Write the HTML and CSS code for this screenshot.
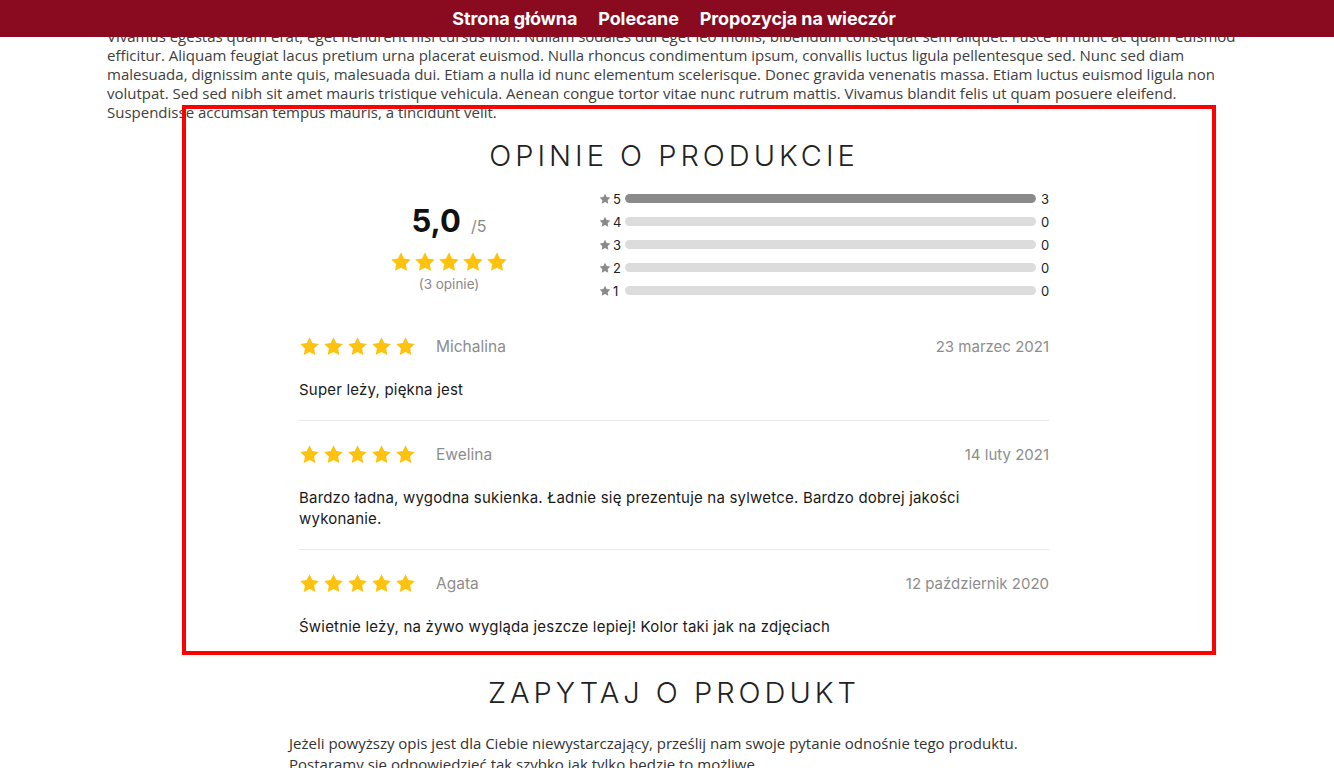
FILE: index.html
```html
<!DOCTYPE html>
<html lang="pl">
<head>
<meta charset="utf-8">
<title>Opinie o produkcie</title>
<link rel="stylesheet" href="styles.css">
</head>
<body>
<svg class="defs" width="0" height="0" aria-hidden="true">
  <symbol id="star" viewBox="0 0 24 24">
    <path d="M12 1.4l3.25 6.7 7.35 1.05-5.3 5.2 1.3 7.3L12 18.2l-6.6 3.45 1.3-7.3-5.3-5.2 7.35-1.05z"/>
  </symbol>
</svg>

<header class="topnav">
  <a href="#">Strona główna</a>
  <a href="#">Polecane</a>
  <a href="#">Propozycja na wieczór</a>
</header>

<main class="page">
  <p class="lorem">Vivamus egestas quam erat, eget hendrerit nisi cursus non. Nullam sodales dui eget leo mollis, bibendum consequat sem aliquet. Fusce in nunc ac quam euismod efficitur. Aliquam feugiat lacus pretium urna placerat euismod. Nulla rhoncus condimentum ipsum, convallis luctus ligula pellentesque sed. Nunc sed diam malesuada, dignissim ante quis, malesuada dui. Etiam a nulla id nunc elementum scelerisque. Donec gravida venenatis massa. Etiam luctus euismod ligula non volutpat. Sed sed nibh sit amet mauris tristique vehicula. Aenean congue tortor vitae nunc rutrum mattis. Vivamus blandit felis ut quam posuere eleifend. Suspendisse accumsan tempus mauris, a tincidunt velit.</p>

  <section class="reviews">
    <h2 class="section-title">Opinie o produkcie</h2>

    <div class="summary">
      <div class="score">
        <div class="score-value"><strong>5,0</strong><span>/5</span></div>
        <div class="stars stars-big">
          <svg><use href="#star"/></svg><svg><use href="#star"/></svg><svg><use href="#star"/></svg><svg><use href="#star"/></svg><svg><use href="#star"/></svg>
        </div>
        <div class="score-count">(3 opinie)</div>
      </div>

      <ul class="bars">
        <li><svg class="bar-star"><use href="#star"/></svg><span class="bar-label">5</span><span class="bar"><span class="bar-fill" style="width:100%"></span></span><span class="bar-count">3</span></li>
        <li><svg class="bar-star"><use href="#star"/></svg><span class="bar-label">4</span><span class="bar"><span class="bar-fill" style="width:0%"></span></span><span class="bar-count">0</span></li>
        <li><svg class="bar-star"><use href="#star"/></svg><span class="bar-label">3</span><span class="bar"><span class="bar-fill" style="width:0%"></span></span><span class="bar-count">0</span></li>
        <li><svg class="bar-star"><use href="#star"/></svg><span class="bar-label">2</span><span class="bar"><span class="bar-fill" style="width:0%"></span></span><span class="bar-count">0</span></li>
        <li><svg class="bar-star"><use href="#star"/></svg><span class="bar-label">1</span><span class="bar"><span class="bar-fill" style="width:0%"></span></span><span class="bar-count">0</span></li>
      </ul>
    </div>

    <div class="review-list">
      <article class="review">
        <div class="review-head">
          <div class="stars"><svg><use href="#star"/></svg><svg><use href="#star"/></svg><svg><use href="#star"/></svg><svg><use href="#star"/></svg><svg><use href="#star"/></svg></div>
          <span class="review-author">Michalina</span>
          <span class="review-date">23 marzec 2021</span>
        </div>
        <p class="review-text">Super leży, piękna jest</p>
      </article>

      <article class="review">
        <div class="review-head">
          <div class="stars"><svg><use href="#star"/></svg><svg><use href="#star"/></svg><svg><use href="#star"/></svg><svg><use href="#star"/></svg><svg><use href="#star"/></svg></div>
          <span class="review-author">Ewelina</span>
          <span class="review-date">14 luty 2021</span>
        </div>
        <p class="review-text">Bardzo ładna, wygodna sukienka. Ładnie się prezentuje na sylwetce. Bardzo dobrej jakości wykonanie.</p>
      </article>

      <article class="review">
        <div class="review-head">
          <div class="stars"><svg><use href="#star"/></svg><svg><use href="#star"/></svg><svg><use href="#star"/></svg><svg><use href="#star"/></svg><svg><use href="#star"/></svg></div>
          <span class="review-author">Agata</span>
          <span class="review-date">12 październik 2020</span>
        </div>
        <p class="review-text">Świetnie leży, na żywo wygląda jeszcze lepiej! Kolor taki jak na zdjęciach</p>
      </article>
    </div>
  </section>

  <section class="ask">
    <h2 class="section-title">Zapytaj o produkt</h2>
    <p class="ask-text">Jeżeli powyższy opis jest dla Ciebie niewystarczający, prześlij nam swoje pytanie odnośnie tego produktu. Postaramy się odpowiedzieć tak szybko jak tylko będzie to możliwe.</p>
  </section>
</main>

<div class="highlight" aria-hidden="true"></div>
</body>
</html>
```

FILE: styles.css
```css
* {
  box-sizing: border-box;
}

html, body {
  margin: 0;
  padding: 0;
}

body {
  position: relative;
  background: #fff;
  color: #3d3d3d;
  font-family: "Open Sans", "Liberation Sans", sans-serif;
  overflow: hidden;
  height: 768px;
}

.defs {
  position: absolute;
  width: 0;
  height: 0;
}

/* fixed top navigation bar */
.topnav {
  position: fixed;
  top: 0;
  left: 0;
  right: 0;
  z-index: 10;
  height: 37px;
  background: #8a0b1f;
  display: flex;
  justify-content: center;
  align-items: center;
  gap: 21px;
  padding-left: 14px;
}

.topnav a {
  color: #fff;
  text-decoration: none;
  font-family: Inter, "DejaVu Sans", sans-serif;
  font-weight: 700;
  font-size: 18px;
  letter-spacing: -0.1px;
}

.page {
  width: 1148px;
  margin: 0 auto;
  padding-left: 14px;
}

.lorem {
  margin: 0;
  padding-top: 27px;
  font-size: 15px;
  line-height: 19px;
  color: #404040;
}

/* reviews block */
.reviews {
  width: 750px;
  margin: 0 auto;
  font-family: Inter, "DejaVu Sans", sans-serif;
}

.section-title {
  margin: 0;
  text-align: center;
  font-family: Inter, "DejaVu Sans", sans-serif;
  font-weight: 300;
  font-size: 29px;
  line-height: 34px;
  letter-spacing: 4px;
  text-transform: uppercase;
  color: #222;
}

.reviews .section-title {
  margin-top: 17px;
}

.summary {
  display: grid;
  grid-template-columns: 300px 450px;
  margin-top: 14px;
}

.score {
  display: flex;
  flex-direction: column;
  align-items: center;
  padding-top: 15px;
}

.score-value {
  display: flex;
  align-items: baseline;
  gap: 10px;
  line-height: 38px;
}

.score-value strong {
  font-size: 31px;
  font-weight: 700;
  color: #111;
}

.score-value span {
  font-size: 16px;
  color: #8a8a8a;
}

.stars {
  display: flex;
  gap: 3px;
  fill: #ffc20e;
}

.stars svg {
  width: 21px;
  height: 21px;
  display: block;
}

.stars-big {
  margin-top: 6px;
  gap: 2px;
}

.stars-big svg {
  width: 22px;
  height: 22px;
}

.score-count {
  margin-top: 2px;
  font-size: 13.5px;
  line-height: 18px;
  color: #8a8a8a;
}

.bars {
  list-style: none;
  margin: 0;
  padding: 0;
}

.bars li {
  display: flex;
  align-items: center;
  height: 23px;
  font-size: 13px;
  color: #222;
}

.bar-star {
  width: 12px;
  height: 12px;
  fill: #8a8a8a;
  flex: none;
}

.bar-label {
  width: 12px;
  padding-left: 2px;
}

.bar {
  flex: 1;
  height: 9px;
  border-radius: 5px;
  background: #dcdcdc;
  overflow: hidden;
  margin: 0 5px 0 2px;
}

.bar-fill {
  display: block;
  height: 100%;
  background: #8a8a8a;
  border-radius: 5px;
}

.bar-count {
  width: 8px;
  text-align: right;
}

/* individual reviews */
.review-list {
  margin-top: 11px;
}

.review {
  padding: 21px 0 20px;
  border-bottom: 1px solid #e8e8e8;
}

.review:last-child {
  border-bottom: none;
  padding-bottom: 14px;
}

.review-head {
  display: flex;
  align-items: center;
  height: 24px;
}

.review-author {
  margin-left: 20px;
  font-size: 15.5px;
  color: #8d8d8d;
}

.review-date {
  margin-left: auto;
  font-size: 15px;
  color: #8d8d8d;
}

.review-text {
  margin: 21px 0 0;
  font-size: 15px;
  letter-spacing: 0.2px;
  line-height: 21px;
  color: #1a1a1a;
  padding-right: 60px;
}

/* question block */
.ask {
  width: 770px;
  margin: 0 auto;
}

.ask .section-title {
  margin-top: 25px;
}

.ask-text {
  margin: 23px 0 0;
  font-size: 15px;
  line-height: 21px;
  color: #333;
}

/* red selection frame drawn over the page */
.highlight {
  position: absolute;
  top: 105px;
  left: 182px;
  width: 1034px;
  height: 550px;
  border: 4px solid #f00;
  pointer-events: none;
  z-index: 5;
}
```
